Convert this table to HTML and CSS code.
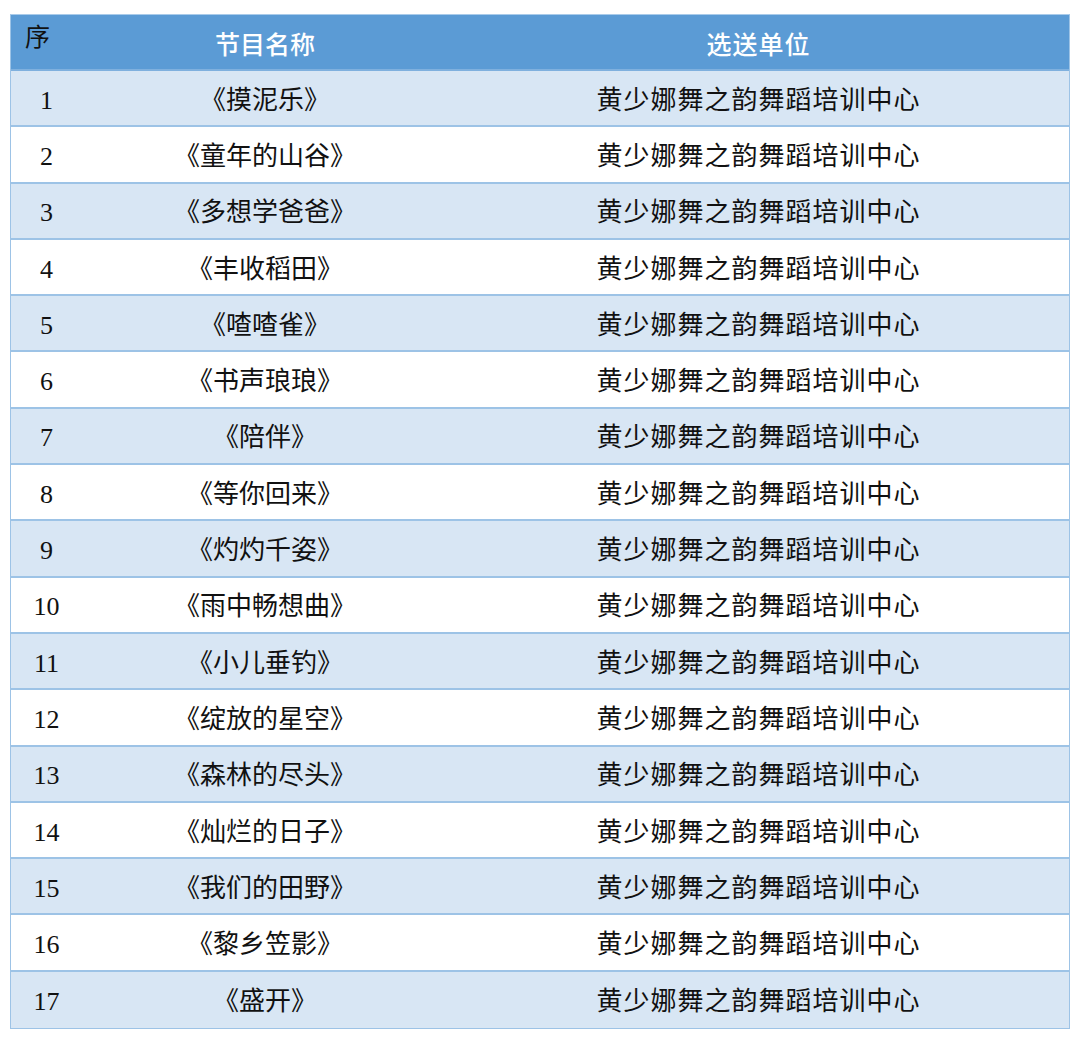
FILE: index.html
```html
<!DOCTYPE html>
<html lang="zh-CN">
<head>
<meta charset="utf-8">
<title>节目名单</title>
<link rel="stylesheet" href="styles.css">
</head>
<body>
<div class="sheet">
  <div class="row head">
    <div class="c-no">序</div>
    <div class="c-name">节目名称</div>
    <div class="c-unit">选送单位</div>
  </div>
  <div class="row alt"><div class="c-no">1</div><div class="c-name">《摸泥乐》</div><div class="c-unit">黄少娜舞之韵舞蹈培训中心</div></div>
  <div class="row"><div class="c-no">2</div><div class="c-name">《童年的山谷》</div><div class="c-unit">黄少娜舞之韵舞蹈培训中心</div></div>
  <div class="row alt"><div class="c-no">3</div><div class="c-name">《多想学爸爸》</div><div class="c-unit">黄少娜舞之韵舞蹈培训中心</div></div>
  <div class="row"><div class="c-no">4</div><div class="c-name">《丰收稻田》</div><div class="c-unit">黄少娜舞之韵舞蹈培训中心</div></div>
  <div class="row alt"><div class="c-no">5</div><div class="c-name">《喳喳雀》</div><div class="c-unit">黄少娜舞之韵舞蹈培训中心</div></div>
  <div class="row"><div class="c-no">6</div><div class="c-name">《书声琅琅》</div><div class="c-unit">黄少娜舞之韵舞蹈培训中心</div></div>
  <div class="row alt"><div class="c-no">7</div><div class="c-name">《陪伴》</div><div class="c-unit">黄少娜舞之韵舞蹈培训中心</div></div>
  <div class="row"><div class="c-no">8</div><div class="c-name">《等你回来》</div><div class="c-unit">黄少娜舞之韵舞蹈培训中心</div></div>
  <div class="row alt"><div class="c-no">9</div><div class="c-name">《灼灼千姿》</div><div class="c-unit">黄少娜舞之韵舞蹈培训中心</div></div>
  <div class="row"><div class="c-no">10</div><div class="c-name">《雨中畅想曲》</div><div class="c-unit">黄少娜舞之韵舞蹈培训中心</div></div>
  <div class="row alt"><div class="c-no">11</div><div class="c-name">《小儿垂钓》</div><div class="c-unit">黄少娜舞之韵舞蹈培训中心</div></div>
  <div class="row"><div class="c-no">12</div><div class="c-name">《绽放的星空》</div><div class="c-unit">黄少娜舞之韵舞蹈培训中心</div></div>
  <div class="row alt"><div class="c-no">13</div><div class="c-name">《森林的尽头》</div><div class="c-unit">黄少娜舞之韵舞蹈培训中心</div></div>
  <div class="row"><div class="c-no">14</div><div class="c-name">《灿烂的日子》</div><div class="c-unit">黄少娜舞之韵舞蹈培训中心</div></div>
  <div class="row alt"><div class="c-no">15</div><div class="c-name">《我们的田野》</div><div class="c-unit">黄少娜舞之韵舞蹈培训中心</div></div>
  <div class="row"><div class="c-no">16</div><div class="c-name">《黎乡笠影》</div><div class="c-unit">黄少娜舞之韵舞蹈培训中心</div></div>
  <div class="row alt last"><div class="c-no">17</div><div class="c-name">《盛开》</div><div class="c-unit">黄少娜舞之韵舞蹈培训中心</div></div>
</div>
</body>
</html>
```

FILE: styles.css
```css
html, body {
  margin: 0;
  padding: 0;
  background: #ffffff;
}
body {
  padding: 14px 10px 0 10px;
  font-family: "Liberation Serif", "Noto Sans CJK SC", serif;
  color: #111111;
}
.sheet {
  width: 1060px;
  border: 1px solid #9dc3e6;
  border-top-color: #a9cbea;
  box-sizing: border-box;
}
.row {
  display: grid;
  grid-template-columns: 71px 366px 1fr;
  height: 56.3px;
  box-sizing: border-box;
  border-bottom: 2px solid #9dc3e6;
  align-items: center;
  padding-top: 5px;
  font-size: 26px;
  line-height: 1;
  background: #ffffff;
}
.row.alt {
  background: #d8e6f4;
}
.row.last {
  border-bottom: none;
}
.row.head {
  height: 56px;
  padding-top: 2px;
  background: #5b9bd5;
  border-bottom: 2px solid #7fb0de;
  color: #ffffff;
  font-family: "Noto Sans CJK SC", sans-serif;
  font-weight: 500;
  font-size: 25px;
}
.c-no {
  text-align: center;
  font-size: 26px;
}
.head .c-no {
  align-self: start;
  text-align: left;
  padding: 8px 0 0 14px;
  color: #111111;
  font-family: "Liberation Serif", "Noto Sans CJK SC", serif;
  font-weight: 400;
  font-size: 25px;
}
.c-name, .c-unit {
  text-align: center;
  font-family: "Liberation Serif", "Noto Sans CJK SC", serif;
}
.head .c-name, .head .c-unit {
  font-family: "Noto Sans CJK SC", sans-serif;
}
.c-unit {
  letter-spacing: 1px;
}
```
